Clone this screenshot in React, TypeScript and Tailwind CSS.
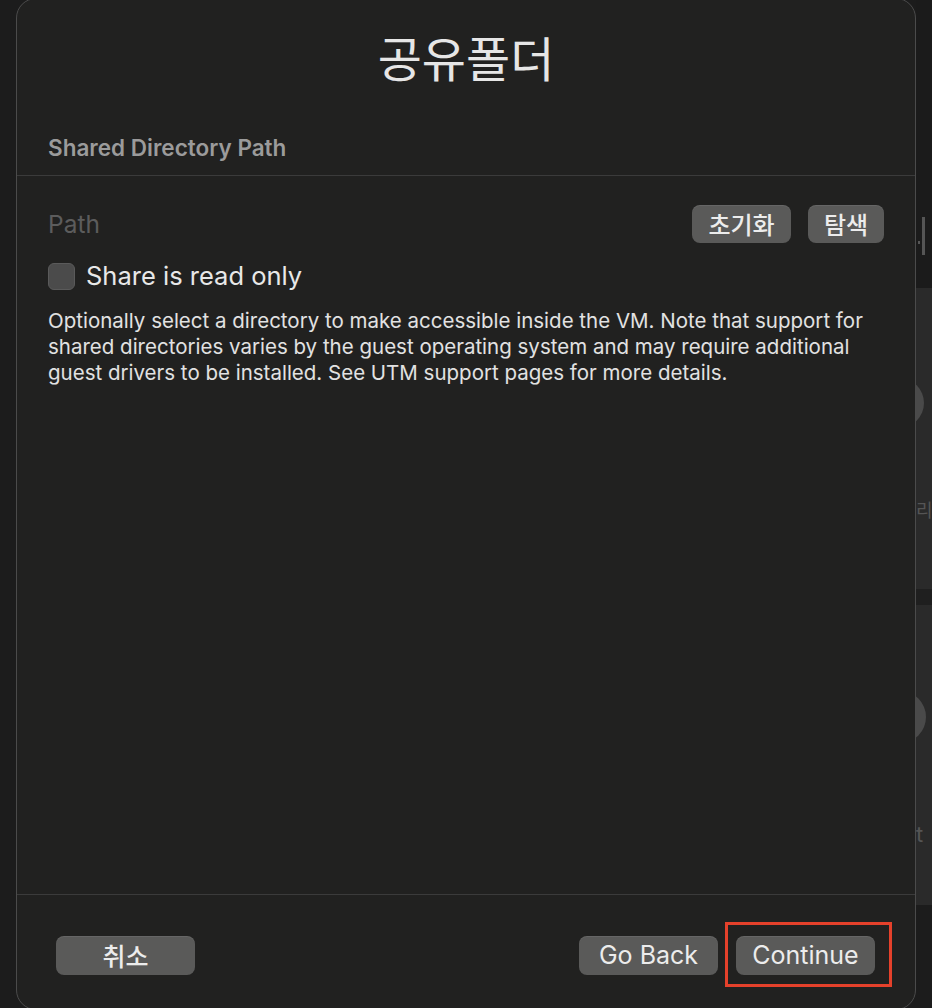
import React from "react";

const latin = "font-['Inter','Noto_Sans_CJK_KR',sans-serif]";
const hangul = "font-['Noto_Sans_CJK_KR',sans-serif]";

function PanelButton({ label, className = "" }: { label: string; className?: string }) {
  return (
    <button
      type="button"
      className={`flex items-center justify-center rounded-[8px] bg-[#5a5a59] text-[#ececec] shadow-[inset_0_1px_0_rgba(255,255,255,0.08)] ${className}`}
    >
      {label}
    </button>
  );
}

// glimpse of the window behind the sheet
function BackdropStrip() {
  return (
    <div className="flex w-[16px] flex-col overflow-hidden bg-[#1c1c1c]">
      <div className="relative h-[288px] shrink-0 bg-[#1b1b1b]">
        <span className="absolute left-[6px] top-[217px] h-[38px] w-[3px] bg-[#555]" />
        <span className="absolute left-[2px] top-[241px] h-[3px] w-[2px] bg-[#555]" />
      </div>
      <div className="relative h-[301px] shrink-0 bg-[#2a2a2a]">
        <span className="absolute -left-[42px] top-[90px] h-[50px] w-[50px] rounded-full bg-[#4a4a4a]" />
        <span className={`absolute left-0 top-[212px] text-[18px] leading-none text-[#555] ${hangul}`}>리</span>
      </div>
      <div className="h-[16px] shrink-0 bg-[#1f1f1f]" />
      <div className="relative h-[300px] shrink-0 bg-[#2a2a2a]">
        <span className="absolute -left-[42px] top-[86px] h-[52px] w-[52px] rounded-full bg-[#4a4a4a]" />
        <span className={`absolute left-0 top-[218px] text-[22px] leading-none text-[#555] ${latin}`}>t</span>
      </div>
      <div className="flex-1 bg-[#1c1c1c]" />
    </div>
  );
}

export default function App() {
  return (
    <div className={`flex h-[1008px] w-[932px] overflow-hidden bg-[#1c1c1c] ${latin}`}>
      <div className="ml-[16px] -mt-[2px] flex h-[1012px] w-[900px] shrink-0 flex-col rounded-[20px] border border-[#4b4b4b] bg-[#212120]">
        <h1 className={`pt-[27px] text-center text-[48px] font-normal leading-[60px] text-[#e6e6e6] ${hangul}`}>
          공유폴더
        </h1>

        <div className="mt-[48px] border-b border-[#3b3b3b] px-[31px] pb-[13px]">
          <h2 className="text-[22.5px] font-semibold leading-[28px] text-[#9b9b9b]">Shared Directory Path</h2>
        </div>

        <div className="flex flex-1 flex-col px-[31px]">
          <div className="mt-[29px] flex h-[38px] items-center">
            <span className="flex-1 text-[24.5px] text-[#5c5c5c]">Path</span>
            <div className="flex gap-[17px]">
              <PanelButton label="초기화" className={`h-[38px] w-[99px] text-[24px] font-medium ${hangul}`} />
              <PanelButton label="탐색" className={`h-[38px] w-[76px] text-[24px] font-medium ${hangul}`} />
            </div>
          </div>

          <label className="mt-[20px] flex h-[27px] items-center gap-[11px]">
            <span className="h-[27px] w-[27px] shrink-0 rounded-[6px] border border-[#5a5a5a] bg-[#4b4b4b]" />
            <span className="text-[25.5px] text-[#e8e8e8]">Share is read only</span>
          </label>

          <p className="mt-[18px] w-[836px] text-[20.5px] leading-[26px] text-[#e2e2e2]">
            Optionally select a directory to make accessible inside the VM. Note that support for shared directories
            varies by the guest operating system and may require additional guest drivers to be installed. See UTM
            support pages for more details.
          </p>
        </div>

        <div className="flex h-[115px] shrink-0 items-start border-t border-[#3b3b3b] pl-[39px] pr-[40px] pt-[41px]">
          <PanelButton label="취소" className={`h-[39px] w-[139px] text-[25px] font-medium ${hangul}`} />
          <div className="ml-auto flex gap-[18px]">
            <PanelButton label="Go Back" className="h-[39px] w-[139px] text-[25px]" />
            <div className="relative">
              <PanelButton label="Continue" className="h-[39px] w-[139px] text-[25px]" />
              <span className="pointer-events-none absolute -left-[11px] -right-[17px] -top-[14px] -bottom-[12px] border-[3px] border-[#e5412b]" />
            </div>
          </div>
        </div>
      </div>
      <BackdropStrip />
    </div>
  );
}
